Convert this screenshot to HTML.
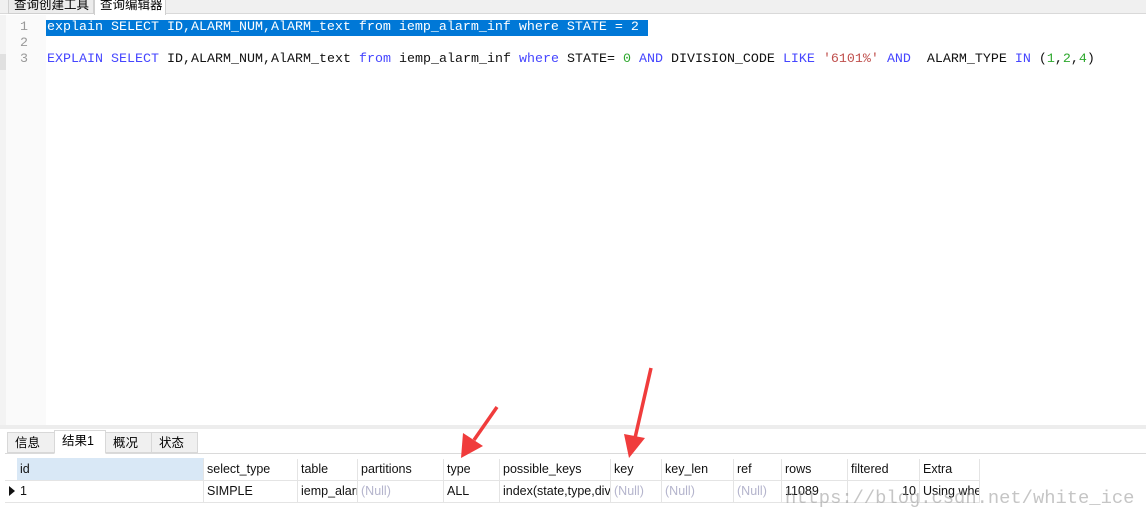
<!DOCTYPE html>
<html><head><meta charset="utf-8"><style>
*{margin:0;padding:0;box-sizing:border-box}
body{width:1146px;height:518px;overflow:hidden;background:#fff;position:relative;font-family:"Liberation Sans","Microsoft YaHei","Noto Sans CJK SC",sans-serif}
.abs{position:absolute}
.code{font-family:"Liberation Mono",monospace;font-size:13.33px;white-space:pre;line-height:16px}
.kw{color:#4646ff}.num{color:#2ea82e}.str{color:#c0504d}
.cell{position:absolute;font-size:12.5px;line-height:21px;padding-left:3px;white-space:nowrap;overflow:hidden;color:#111;border-right:1px solid #e4e4e4}
.nul{color:#b4b4cc}
.tab{position:absolute;top:432px;height:21px;font-size:12.5px;line-height:21px;padding-left:7px;background:#f0f0f0;border:1px solid #d8d8d8;font-family:"Liberation Sans","Noto Sans CJK SC",sans-serif}
</style></head><body>
<div class="abs" style="left:0;top:0;width:1146px;height:14px;background:#f0f0f0;border-bottom:1px solid #d9d9d9"></div>
<div class="abs" style="left:8px;top:-6px;width:86px;height:20px;background:#ececec;border:1px solid #d0d0d0;font-size:12.5px;line-height:18px;padding-left:5px;font-family:'Noto Sans CJK SC',sans-serif">查询创建工具</div>
<div class="abs" style="left:94px;top:-6px;width:72px;height:21px;background:#fff;border:1px solid #d0d0d0;border-bottom:none;font-size:12.5px;line-height:18px;padding-left:5px;font-family:'Noto Sans CJK SC',sans-serif">查询编辑器</div>
<div class="abs" style="left:0;top:15px;width:6px;height:410px;background:#f3f3f3"></div>
<div class="abs" style="left:0;top:54px;width:6px;height:16px;background:#e0e0e0"></div>
<div class="abs" style="left:6px;top:15px;width:40px;height:410px;background:#fafafa"></div>
<div class="abs code" style="left:20px;top:20px;color:#999">1</div>
<div class="abs code" style="left:20px;top:36px;color:#999">2</div>
<div class="abs code" style="left:20px;top:52px;color:#999">3</div>
<div class="abs" style="left:46px;top:20px;width:602px;height:16px;background:#0078d7"></div>
<div class="abs code" style="left:47px;top:20px;color:#fff">explain SELECT ID,ALARM_NUM,AlARM_text from iemp_alarm_inf where STATE = 2</div>
<div class="abs code" style="left:47px;top:52px;color:#111"><span class="kw">EXPLAIN</span> <span class="kw">SELECT</span> ID,ALARM_NUM,AlARM_text <span class="kw">from</span> iemp_alarm_inf <span class="kw">where</span> STATE= <span class="num">0</span> <span class="kw">AND</span> DIVISION_CODE <span class="kw">LIKE</span> <span class="str">'6101%'</span> <span class="kw">AND</span>  ALARM_TYPE <span class="kw">IN</span> (<span class="num">1</span>,<span class="num">2</span>,<span class="num">4</span>)</div>
<div class="abs" style="left:0;top:425px;width:1146px;height:4px;background:#ededed"></div>
<div class="abs" style="left:5px;top:429px;width:1141px;height:89px;background:#fff"></div>
<div class="abs" style="left:5px;top:453px;width:1141px;height:1px;background:#dadada"></div>
<div class="tab" style="left:7px;width:48px">信息</div>
<div class="tab" style="left:54px;width:52px;background:#fff;border-bottom-color:#fff;top:430px;height:24px">结果1</div>
<div class="tab" style="left:105px;width:47px">概况</div>
<div class="tab" style="left:151px;width:47px">状态</div>
<div class="abs" style="left:17px;top:458px;width:187px;height:22px;background:#d9e8f6"></div>
<div class="abs" style="left:5px;top:480px;width:975px;height:1px;background:#e4e4e4"></div>
<div class="abs" style="left:5px;top:502px;width:975px;height:1px;background:#e4e4e4"></div>
<div class="abs" style="left:9px;top:486px;width:0;height:0;border-top:5px solid transparent;border-bottom:5px solid transparent;border-left:6px solid #111"></div>
<div class="cell" style="left:17px;top:459px;width:187px">id</div>
<div class="cell" style="left:204px;top:459px;width:94px">select_type</div>
<div class="cell" style="left:298px;top:459px;width:60px">table</div>
<div class="cell" style="left:358px;top:459px;width:86px">partitions</div>
<div class="cell" style="left:444px;top:459px;width:56px">type</div>
<div class="cell" style="left:500px;top:459px;width:111px">possible_keys</div>
<div class="cell" style="left:611px;top:459px;width:51px">key</div>
<div class="cell" style="left:662px;top:459px;width:72px">key_len</div>
<div class="cell" style="left:734px;top:459px;width:48px">ref</div>
<div class="cell" style="left:782px;top:459px;width:66px">rows</div>
<div class="cell" style="left:848px;top:459px;width:72px">filtered</div>
<div class="cell" style="left:920px;top:459px;width:60px">Extra</div>
<div class="cell" style="left:17px;top:481px;width:187px">1</div>
<div class="cell" style="left:204px;top:481px;width:94px">SIMPLE</div>
<div class="cell" style="left:298px;top:481px;width:60px">iemp_alarm</div>
<div class="cell nul" style="left:358px;top:481px;width:86px">(Null)</div>
<div class="cell" style="left:444px;top:481px;width:56px">ALL</div>
<div class="cell" style="left:500px;top:481px;width:111px">index(state,type,division</div>
<div class="cell nul" style="left:611px;top:481px;width:51px">(Null)</div>
<div class="cell nul" style="left:662px;top:481px;width:72px">(Null)</div>
<div class="cell nul" style="left:734px;top:481px;width:48px">(Null)</div>
<div class="cell" style="left:782px;top:481px;width:66px">11089</div>
<div class="cell" style="left:848px;top:481px;width:72px;text-align:right;padding-right:3px">10</div>
<div class="cell" style="left:920px;top:481px;width:60px">Using where</div>
<div class="abs" style="left:785px;top:487px;font-family:'Liberation Mono',monospace;font-size:18.8px;color:rgba(150,150,150,0.55);white-space:nowrap">https://blog.csdn.net/white_ice</div>
<svg class="abs" style="left:0;top:0" width="1146" height="518">
<line x1="497" y1="407" x2="474" y2="440" stroke="#f03c3c" stroke-width="3.5"/>
<polygon points="461,458 463,433 483,446" fill="#f03c3c"/>
<line x1="651" y1="368" x2="635" y2="438" stroke="#f03c3c" stroke-width="3.5"/>
<polygon points="629,458 624,434 645,438" fill="#f03c3c"/>
</svg>
</body></html>
